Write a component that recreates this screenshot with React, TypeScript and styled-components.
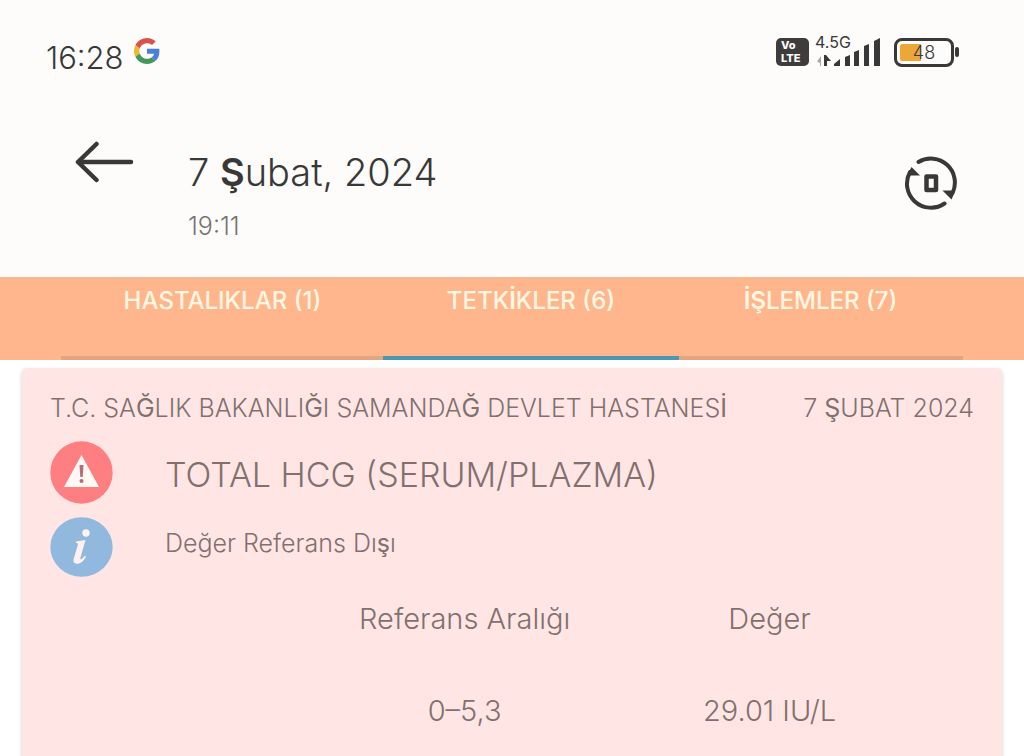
import React from "react";
import styled, { createGlobalStyle } from "styled-components";

const ink = "#383838";
const muted = "#82706f";

const GlobalStyle = createGlobalStyle`
  *, *::before, *::after { box-sizing: border-box; }
  html, body { margin: 0; padding: 0; }
  body {
    background: #ffffff;
    color: ${ink};
    font-family: Inter, "Liberation Sans", sans-serif;
    font-weight: 300;
  }
  h1, h2, p { margin: 0; font-weight: 300; }
  svg { display: block; }
`;

const Screen = styled.div`
  height: 100vh;
  overflow: hidden;
`;

const Top = styled.div`
  background: #fdfcfa;
`;

const StatusBar = styled.div`
  display: flex;
  justify-content: space-between;
  align-items: flex-start;
  padding: 36px 65px 0 46px;
`;

const StatusGroup = styled.div<{ $gap: number }>`
  display: flex;
  gap: ${(p) => p.$gap}px;
`;

const Clock = styled.time`
  margin-top: 4px;
  font-size: 31px;
  line-height: 36px;
`;

const VolteBadge = styled.span`
  display: flex;
  flex-direction: column;
  justify-content: center;
  width: 33px;
  height: 28px;
  margin: 2px 6px 0 0;
  padding-left: 5px;
  border-radius: 5px;
  background: #3e3d3b;
  color: #fdfcfa;
  font-size: 11px;
  font-weight: 800;
  line-height: 13px;
`;

const Line = styled.span`
  display: block;
`;

const Network = styled.span`
  width: 66px;
  margin-right: 13px;
  font-size: 16px;
  font-weight: 400;
  line-height: 12px;
`;

const SignalBars = styled.svg`
  margin-top: -11px;
`;

const Battery = styled.span`
  display: flex;
  align-items: center;
`;

const BatteryCell = styled.span`
  width: 60px;
  height: 29px;
  border: 3px solid ${ink};
  border-radius: 8px;
  background: linear-gradient(to right, #eda736 21px, #fdfcfa 21px) content-box;
  padding: 3px;
  font-size: 18px;
  line-height: 18px;
  text-align: center;
`;

const BatteryTip = styled.span`
  width: 4px;
  height: 10px;
  margin-left: 1px;
  border-radius: 2px;
  background: ${ink};
`;

const Header = styled.header`
  display: flex;
  align-items: flex-start;
  padding: 64px 66px 28px 74px;
`;

const IconButton = styled.button<{ $top: number }>`
  margin: ${(p) => p.$top}px 0 0;
  padding: 0;
  border: 0;
  background: none;
  color: ${ink};
  cursor: pointer;
`;

const Heading = styled.div`
  flex: 1;
  margin-left: 54px;
`;

const Title = styled.h1`
  font-size: 38px;
  line-height: 64px;
`;

const Time = styled.p`
  color: #757473;
  font-size: 25px;
  line-height: 45px;
`;

const Heavy = styled.span`
  font-weight: 600;
`;

const Sturdy = styled.span`
  font-weight: 400;
`;

const Tabs = styled.nav`
  display: flex;
  padding: 0 6%;
  background: #ffb68d;
`;

const Tab = styled.button<{ $active?: boolean; $share: number }>`
  flex: ${(p) => p.$share} 1 0;
  height: 83px;
  padding: 6px 0 0;
  border: 0;
  border-bottom: 4px solid ${(p) => (p.$active ? "#4b98b0" : "#dfa67f")};
  background: none;
  color: #fff7e2;
  font-family: inherit;
  font-size: 24px;
  font-weight: 500;
  line-height: 36px;
  display: flex;
  justify-content: center;
  align-items: flex-start;
  white-space: pre;
  cursor: pointer;
`;

const Card = styled.article`
  margin: 8px 22px 0;
  padding: 20px 28px 80px;
  border-radius: 5px;
  background: #ffe6e5;
  box-shadow: 0 2px 4px rgba(0, 0, 0, 0.2);
  color: ${muted};
`;

const CardTop = styled.div`
  display: flex;
  justify-content: space-between;
  font-size: 25px;
  line-height: 40px;
  white-space: nowrap;
`;

const Result = styled.div`
  display: grid;
  grid-template-columns: 63px 1fr;
  column-gap: 52px;
  row-gap: 8px;
  margin-top: 13px;
`;

const TestName = styled.h2`
  font-size: 34px;
  line-height: 68px;
`;

const Note = styled.p`
  font-size: 25px;
  line-height: 52px;
`;

const Values = styled.table`
  width: 66%;
  margin: 0 52px 0 auto;
  border-collapse: collapse;
  table-layout: fixed;
  font-size: 29px;
  text-align: center;

  th, td { padding: 0; font-weight: 300; }
  th { line-height: 84px; }
  td { line-height: 100px; }
`;

const GoogleLogo = () => (
  <svg width="26" height="30" viewBox="0 0 48 48" role="img" aria-label="Google">
    <path fill="#d9534a" d="M24 9.5c3.54 0 6.71 1.22 9.21 3.6l6.85-6.85C35.9 2.38 30.47 0 24 0 14.62 0 6.51 5.38 2.56 13.22l7.98 6.19C12.43 13.72 17.74 9.5 24 9.5z" />
    <path fill="#4a80d8" d="M46.98 24.55c0-1.57-.15-3.09-.38-4.55H24v9.02h12.94c-.58 2.96-2.26 5.48-4.78 7.18l7.73 6c4.51-4.18 7.09-10.36 7.09-17.65z" />
    <path fill="#efb92f" d="M10.53 28.59c-.48-1.45-.76-2.99-.76-4.59s.27-3.14.76-4.59l-7.98-6.19C.92 16.46 0 20.12 0 24c0 3.88.92 7.54 2.56 10.78l7.97-6.19z" />
    <path fill="#42985a" d="M24 48c6.48 0 11.93-2.13 15.89-5.81l-7.73-6c-2.15 1.45-4.92 2.3-8.16 2.3-6.26 0-11.57-4.22-13.47-9.91l-7.98 6.19C6.51 42.62 14.62 48 24 48z" />
  </svg>
);

const Signal = () => (
  <SignalBars width="66" height="31" viewBox="0 0 66 31" aria-hidden="true">
    <path d="M2 24.500l4-5.500v10h-1v-3z" fill="#a9a8a6" />
    <path d="M9 18h2l5 6h-4v5H9z" fill={ink} />
    <path d="M19 29v-2l6-5v7z M30 20l5-2v11h-5z M39 15l5-2v16h-5z M49 9l5-2v22h-5z M59 4l6-3v28h-6z" fill={ink} />
  </SignalBars>
);

const BackArrow = () => (
  <svg width="60" height="42" viewBox="0 0 60 42" fill="none" stroke="currentColor" strokeWidth="4.500" strokeLinecap="round" strokeLinejoin="round" aria-hidden="true">
    <path d="M57 21H4M22.500 3L4 21l18.500 18" />
  </svg>
);

const RotateIcon = () => (
  <svg width="54" height="56" viewBox="0 0 54 56" fill="none" stroke="currentColor" strokeWidth="4" aria-hidden="true">
    <path strokeLinecap="round" d="M14.500 7A24 24 0 0 1 48.500 38" />
    <path strokeLinecap="round" d="M40.500 48.500A24 24 0 0 1 6 17" />
    <path d="M7.500 12l8.500 8.500H3z M47.500 44.500l-9-9H51.500z" fill="currentColor" stroke="none" />
    <rect x="22.500" y="21.500" width="9.500" height="13.500" strokeWidth="4.500" strokeLinejoin="round" />
  </svg>
);

const WarningIcon = () => (
  <svg width="63" height="63" viewBox="0 0 63 63" role="img" aria-label="Uyarı">
    <circle cx="31.500" cy="31.500" r="31.200" fill="#fe7f82" />
    <path d="M31.500 14L49 46H14z" fill="#fff8f5" />
    <path d="M29.500 24h4l-.8 12h-2.400z" fill="#b66c70" />
    <circle cx="31.500" cy="40" r="2" fill="#b66c70" />
  </svg>
);

const InfoIcon = () => (
  <svg width="63" height="60" viewBox="0 0 63 60" role="img" aria-label="Bilgi">
    <ellipse cx="31.500" cy="30" rx="31.200" ry="29.700" fill="#90b9dd" />
    <circle cx="36" cy="16" r="3.700" fill="#fff0f2" />
    <path d="M26 24.500l9.500-1.500-5 17.500c-.6 2 .4 2.200 1.500 1.200l2.800-3 1.200 1c-3 5-5.500 7-9 7-3.500 0-4-2.500-3.200-5.200l4-13.500c.4-1.600-.3-2-2-2z" fill="#fff0f2" />
  </svg>
);

export default function App() {
  return (
    <Screen>
      <GlobalStyle />
      <Top>
        <StatusBar>
          <StatusGroup $gap={10}>
            <Clock>16:28</Clock>
            <GoogleLogo />
          </StatusGroup>
          <StatusGroup $gap={0}>
            <VolteBadge>
              <Line>Vo</Line>
              <Line>LTE</Line>
            </VolteBadge>
            <Network>
              <Line>4.5G</Line>
              <Signal />
            </Network>
            <Battery>
              <BatteryCell>48</BatteryCell>
              <BatteryTip />
            </Battery>
          </StatusGroup>
        </StatusBar>
        <Header>
          <IconButton $top={1} type="button" aria-label="Geri">
            <BackArrow />
          </IconButton>
          <Heading>
            <Title>
              7 <Heavy>Ş</Heavy>ubat, 2024
            </Title>
            <Time>19:11</Time>
          </Heading>
          <IconButton $top={15} type="button" aria-label="Ekranı döndür">
            <RotateIcon />
          </IconButton>
        </Header>
      </Top>
      <Tabs>
        <Tab $share={322} type="button">HASTALIKLAR (1)</Tab>
        <Tab $share={295} $active type="button">TETK<Heavy>İ</Heavy>KLER (6)</Tab>
        <Tab $share={284} type="button"><Heavy>İŞ</Heavy>LEMLER (7)</Tab>
      </Tabs>
      <Card>
        <CardTop>
          <span>
            T.C. SA<Sturdy>Ğ</Sturdy>LIK BAKANLI<Sturdy>Ğ</Sturdy>I SAMANDA<Sturdy>Ğ</Sturdy> DEVLET HASTANES<Sturdy>İ</Sturdy>
          </span>
          <span>
            7 <Sturdy>Ş</Sturdy>UBAT 2024
          </span>
        </CardTop>
        <Result>
          <WarningIcon />
          <TestName>TOTAL HCG (SERUM/PLAZMA)</TestName>
          <InfoIcon />
          <Note>
            Değer Referans Dı<Sturdy>ş</Sturdy>ı
          </Note>
        </Result>
        <Values>
          <thead>
            <tr>
              <th scope="col">Referans Aralığı</th>
              <th scope="col">Değer</th>
            </tr>
          </thead>
          <tbody>
            <tr>
              <td>0–5,3</td>
              <td>29.01 IU/L</td>
            </tr>
          </tbody>
        </Values>
      </Card>
    </Screen>
  );
}
